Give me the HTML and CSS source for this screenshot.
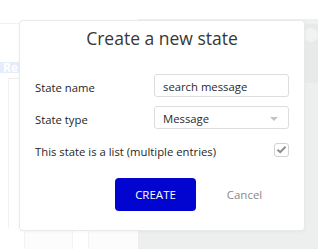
FILE: index.html
```html
<!DOCTYPE html>
<html lang="en">

<head>
    <meta charset="UTF-8">
    <meta name="viewport" content="width=device-width, initial-scale=1.0">
    <title>Create a new state</title>
    <link rel="stylesheet" href="styles.css">
</head>

<body>
    <div class="editor">
        <div class="canvas">
            <div class="canvas-top"></div>
            <div class="canvas-body">
                <div class="rep-bar">Rep</div>
                <div class="rep-grid"></div>
            </div>
            <div class="canvas-foot">
                <span class="col"></span>
                <span class="col"></span>
                <span class="col"></span>
            </div>
        </div>
        <div class="side">
            <div class="side-top"></div>
            <div class="side-head"><span class="dot"></span></div>
            <div class="side-body"></div>
        </div>
    </div>

    <div class="dialog">
        <div class="dialog-title">Create a new state</div>

        <div class="rows">
            <div class="row">
                <span class="label">State name</span>
                <div class="field">search message</div>
            </div>
            <div class="row">
                <span class="label">State type</span>
                <div class="field select">Message<span class="caret"></span></div>
            </div>
            <div class="row">
                <span class="label">This state is a list (multiple entries)</span>
                <span class="check">
                    <svg width="11" height="9" viewBox="0 0 11 9">
                        <path d="M1.5 4.8 L4.2 7.2 L9.5 1.8" fill="none" stroke="#8c8c8c" stroke-width="2" />
                    </svg>
                </span>
            </div>
        </div>

        <div class="actions">
            <div class="button">CREATE</div>
            <div class="cancel">Cancel</div>
        </div>
    </div>
</body>

</html>
```

FILE: styles.css
```css
body * {
    font-family: "Open Sans", sans-serif;
    box-sizing: border-box;
}

body {
    margin: 0;
    width: 318px;
    height: 249px;
    overflow: hidden;
    position: relative;
    background: #ffffff;
    color: #333333;
}

/* editor behind the popup */
.editor {
    display: flex;
    height: 249px;
}

.canvas {
    display: flex;
    flex-direction: column;
    width: 139px;
}

.canvas-top {
    height: 24px;
    border-bottom: 1px solid #fbefe2;
}

.canvas-body {
    flex: 1;
    padding-top: 38px;
}

.rep-bar {
    height: 11px;
    background: #e5ecfa;
    color: #ffffff;
    font-size: 12px;
    font-weight: 700;
    line-height: 11px;
    padding-left: 3px;
}

.rep-grid {
    height: 150px;
    margin-top: 5px;
    border-top: 1px solid #eeeeee;
    border-left: 1px solid #f1f1f1;
    margin-left: 8px;
}

.canvas-foot {
    display: flex;
    height: 19px;
}

.canvas-foot .col {
    border-left: 1px solid #f3f3f3;
}

.canvas-foot .col:nth-child(1) {
    margin-left: 24px;
    width: 48px;
    background: #fcfcfc;
}

.canvas-foot .col:nth-child(2) {
    width: 16px;
}

.canvas-foot .col:nth-child(3) {
    width: 50px;
    background: #fcfcfc;
}

.side {
    flex: 1;
    display: flex;
    flex-direction: column;
}

.side-top {
    height: 19px;
}

.side-head {
    height: 64px;
    background: #e8e9e9;
    border-top: 5px solid #eeefef;
    padding: 4px 0 0 166px;
}

.dot {
    display: block;
    width: 14px;
    height: 14px;
    border-radius: 50%;
    background: #f1f2f2;
}

.side-body {
    flex: 1;
    background: #edeeee;
}

/* popup */
.dialog {
    position: absolute;
    left: 19px;
    top: 20px;
    width: 286px;
    height: 211px;
    background: #ffffff;
    border: 1px solid #e9e9e9;
    border-radius: 4px;
    box-shadow: 0 1px 3px rgba(0, 0, 0, 0.04);
    padding: 3px 15px 0 15px;
}

.dialog-title {
    font-size: 17.5px;
    line-height: 28px;
    text-align: center;
    color: #373737;
}

.rows {
    display: flex;
    flex-direction: column;
    gap: 9px;
    margin-top: 22px;
}

.row {
    display: flex;
    align-items: center;
    justify-content: space-between;
    height: 23px;
}

.label {
    font-size: 11.3px;
    color: #262626;
    padding-top: 3px;
}

.field {
    position: relative;
    width: 135px;
    height: 23px;
    border: 1px solid #dddddd;
    border-radius: 3px;
    padding: 2px 8px 0;
    font-size: 11.3px;
    line-height: 19px;
    color: #2a2a2a;
}

.caret {
    position: absolute;
    right: 10px;
    top: 10px;
    border-left: 4px solid transparent;
    border-right: 4px solid transparent;
    border-top: 4px solid #c4c4c4;
}

.check {
    display: flex;
    align-items: center;
    justify-content: center;
    width: 15px;
    height: 14px;
    border: 1px solid #d2d2d2;
    border-radius: 3px;
}

.actions {
    display: flex;
    gap: 8px;
    margin-top: 17px;
    padding-left: 80px;
}

.button {
    display: flex;
    align-items: center;
    justify-content: center;
    width: 81px;
    height: 33px;
    background: #0205cf;
    color: #ffffff;
    font-size: 11.5px;
    border-radius: 4px;
    user-select: none;
}

.cancel {
    display: flex;
    align-items: center;
    justify-content: center;
    width: 81px;
    height: 33px;
    font-size: 11.5px;
    color: #8a8a8a;
}
```
